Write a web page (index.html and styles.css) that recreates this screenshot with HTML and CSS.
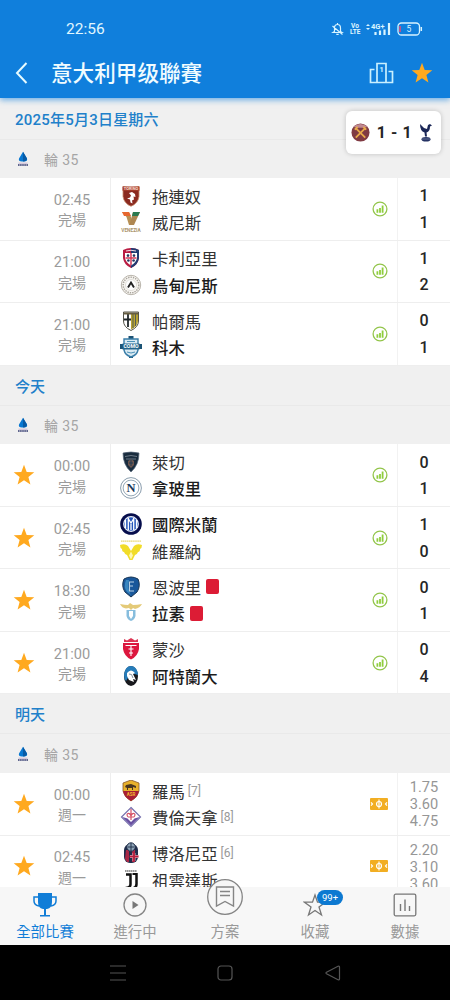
FILE: index.html
```html
<!DOCTYPE html>
<html lang="zh-Hant">
<head>
    <meta charset="UTF-8">
    <meta name="viewport" content="width=device-width, initial-scale=1.0">
    <title>意大利甲级聯賽</title>
    <link rel="stylesheet" href="styles.css">
</head>
<body>
    <!-- Icons and crests -->
    <svg class="defs" width="0" height="0">
        <symbol id="star" viewBox="0 0 22 22"><path fill="#ffa91f" d="M11 .8l2.7 7.1 7.6.4-5.9 4.8 2 7.4L11 16.3l-6.4 4.2 2-7.4L.7 8.3l7.6-.4z"/></symbol>
        <symbol id="stats" viewBox="0 0 16 16"><circle cx="8" cy="8" r="6.9" fill="none" stroke="#93c54b" stroke-width="1.3"/><path d="M5.400 8.300v3.500M8 7v4.800M10.600 4.500v7.300" stroke="#8fce3c" stroke-width="1.800"/></symbol>
        <symbol id="pitch" viewBox="0 0 18 12"><rect width="18" height="12" rx="1" fill="#f2ae22"/><path d="M9 1.500v9M1 4.400l1.500 1.600L1 7.600M17 4.400L15.500 6 17 7.600" stroke="#fff" stroke-width="1.200" fill="none"/><circle cx="9" cy="6" r="2.500" stroke="#fff" stroke-width="1.200" fill="none"/></symbol>
        <symbol id="seriea" viewBox="0 0 12 16"><path d="M6 .8l4 6.700Q11 11 6 10.500 1 11 2 7.500z" fill="#0878d2"/><path d="M6 .8l4 6.700Q10 10 6 10.500z" fill="#075aa5"/><path d="M1.500 12.200h9" stroke="#c9b6d2" stroke-width="1"/><path d="M1 14h10" stroke="#30386e" stroke-width="1.500" stroke-dasharray="1.600 .5"/></symbol>

        <symbol id="torino" viewBox="0 0 22 22"><path d="M3 1.500q8 2 16 0v10q-1 7-8 9.800Q4 18.500 3 11.500z" fill="#8b2a20" stroke="#c88e70" stroke-width=".8"/><path d="M2.500 1.500h17v4.200h-17z" fill="#a9412f"/><text x="11" y="5" font-size="4" font-weight="700" text-anchor="middle" fill="#f6dfd2">TORINO</text><path d="M9 8l3-1 3 2 .5 3-2-.5.500 3-2 1 .5 3-2-1-.5-3-3-1 3-1 1-2z" fill="#fff"/></symbol>
        <symbol id="venezia" viewBox="0 0 22 22"><path d="M2 1h7l5 13H9L6.500 6z" fill="#b79055"/><path d="M2 1h7l2 4H4z" fill="#e6672f"/><path d="M13 1h7l-6 13H9.500z" fill="#ae8752"/><path d="M13 1h7l-2 4h-6z" fill="#2c7a50"/><text x="11" y="20.500" font-size="4.800" font-weight="700" text-anchor="middle" fill="#aa936d">VENEZIA</text></symbol>
        <symbol id="cagliari" viewBox="0 0 22 22"><path d="M3 3q8-4 16 0v8q-1 7-8 10-7-3-8-10z" fill="#b91c43"/><path d="M11 1q5 0 8 2v8q-1 7-8 10z" fill="#203b72"/><path d="M5 6h12v5q-1 5-6 7.500Q6 16 5 11z" fill="#fff"/><path d="M11 6v12M5.500 11h11" stroke="#d33b59" stroke-width="1.500"/><g fill="#263760"><circle cx="8" cy="8.600" r="1.300"/><circle cx="14" cy="8.600" r="1.300"/><circle cx="8.400" cy="13.500" r="1.300"/><circle cx="13.600" cy="13.500" r="1.300"/></g><path d="M6 4q5-1.500 10 0" stroke="#efd9e1" fill="none"/></symbol>
        <symbol id="udinese" viewBox="0 0 22 22"><circle cx="11" cy="11" r="9.700" fill="#f8f6f2" stroke="#b9b4ab"/><circle cx="11" cy="11" r="7.800" fill="none" stroke="#aaa69e" stroke-width="1.500" stroke-dasharray="1.400 1"/><circle cx="11" cy="11" r="5.500" fill="#fff" stroke="#d0ccc5" stroke-width=".6"/><path d="M8 13.500l3-5 3 5" fill="none" stroke="#222" stroke-width="1.900"/></symbol>
        <symbol id="parma" viewBox="0 0 22 22"><path d="M3.500 2h15v9q0 6-7.500 9.500Q3.500 17 3.500 11z" fill="#fff" stroke="#555449"/><path d="M11 4h7v7q0 5-7 8.500z" fill="#b8a332"/><path d="M13 4v14M15.500 4v12" stroke="#545e55" stroke-width="1"/><path d="M8 4v13M4 9.500h7" stroke="#20272b" stroke-width="1.800"/><path d="M4 3.500h14" stroke="#665d40" stroke-width="2"/></symbol>
        <symbol id="como" viewBox="0 0 22 22"><path d="M8.500 0h5v3h-5zM0 8h4v5H0zM18 8h4v5h-4zM9 18h4v4H9z" fill="#1c5375"/><path d="M4 3h14v11q-1 5-7 7-6-2-7-7z" fill="#d9eaf3" stroke="#397da8" stroke-width="1.400"/><path d="M2.500 7.500h17v6h-17z" fill="#24658c"/><text x="11" y="12.400" font-size="5.200" font-weight="700" text-anchor="middle" fill="#fff">COMO</text><path d="M7 5.500h8M7 16q4 2 8 0" stroke="#4c91b8" fill="none"/></symbol>
        <symbol id="lecce" viewBox="0 0 22 22"><path d="M3 2q8-2 16 0 0 12-8 19Q3 14 3 2z" fill="#192c3e" stroke="#566578" stroke-width=".7"/><path d="M5 5.500q6-2 12 0M6 8h10" stroke="#6c7986" fill="none"/><path d="M8 10q3-3 6 0v4l-3 3-3-3z" fill="#6c554e"/><path d="M9 12h4M11 9v6" stroke="#233a50"/></symbol>
        <symbol id="napoli" viewBox="0 0 22 22"><circle cx="11" cy="11" r="10.400" fill="#fff" stroke="#6c8498" stroke-width=".8"/><circle cx="11" cy="11" r="7.900" fill="none" stroke="#7890a2" stroke-width=".8"/><text class="serif" x="11" y="15.200" font-size="12.500" font-weight="700" text-anchor="middle" fill="#18385c">N</text></symbol>
        <symbol id="inter" viewBox="0 0 22 22"><circle cx="11" cy="11" r="10.800" fill="#060d4c"/><circle cx="11" cy="11" r="7.300" fill="#2455ba" stroke="#e9eff9" stroke-width="1.200"/><path d="M8.300 5v12M13.700 5v12M5.500 7v8M16.500 7v8M8.500 6l2.500 4 2.500-4M11 9v8" stroke="#fff" stroke-width="1.300" fill="none"/></symbol>
        <symbol id="verona" viewBox="0 0 22 22"><path d="M1 1.200h20" stroke="#e8d873" stroke-width="1.200" stroke-dasharray="1.500 .4"/><path d="M0 5q5-2 8 1l3 5 3-5q3-3 8-1 0 3-2 4 0 3-2 3-1 3-3 3l-2.500 5h-3L7 15q-2 0-3-3-2 0-2-3Q0 8 0 5z" fill="#f1dc28"/><path d="M11 11.500l-2 4 2 4 2-4z" fill="#fff8b0"/></symbol>
        <symbol id="empoli" viewBox="0 0 22 22"><path d="M4 3q7-4 14 0 3 7-1 13l-6 5-6-5Q1 10 4 3z" fill="#19579a" stroke="#153353"/><path d="M6 4q-3 7 1 12l4 3q-4-6-2-15z" fill="#3986bf"/><path d="M14 6H9.500v9H14M9.500 10H13" stroke="#b9d1e5" stroke-width="1.100" fill="none"/></symbol>
        <symbol id="lazio" viewBox="0 0 22 22"><path d="M0 2q5 1 8 1l2-2 3 2q4 0 9-1-2 4-7 5l-2-1-2 2-2-2-3 .5Q2 6 0 2z" fill="#e4ca78"/><path d="M6.500 8h9v6q-1 4-4.500 5-3.500-1-4.500-5z" fill="#87bddd"/><path d="M9 9h4v5l-2 3-2-3z" fill="#fff"/></symbol>
        <symbol id="monza" viewBox="0 0 22 22"><path d="M4 1l3 1.500L11 0l4 2.500L18 1v3H4z" fill="#dd3554"/><path d="M3 5h16v6q-1 7-8 10.500Q4 18 3 11z" fill="#dc173e"/><path d="M5.500 7.500h11M8.500 11h5M11 8v10M9 15h4" stroke="#fff" stroke-width="1.100"/></symbol>
        <symbol id="atalanta" viewBox="0 0 22 22"><ellipse cx="11" cy="11" rx="7" ry="10" fill="#18191d"/><path d="M11 1c4 0 7 4 7 9l-7-2-5 8Q4 14 4 10q1-9 7-9z" fill="#267cba"/><path d="M7 8q4-5 8 0l-2 1 3 6-3-1 1 3-5-2-2-4z" fill="#fff"/><path d="M9 9q3-1 4 4" stroke="#8392a1" fill="none"/></symbol>
        <symbol id="roma" viewBox="0 0 22 22"><path d="M3 3l8-3 8 3v8q-1 6-8 10-7-4-8-10z" fill="#e8b12b" stroke="#86572c" stroke-width=".8"/><path d="M3 11h16q-1 6-8 10-7-4-8-10z" fill="#a81d35"/><path d="M6 5l5-1 5 2v2l-3-1v3h-1V8H8v2H7V8L5 7z" fill="#49351f"/><text x="11" y="15.500" font-size="4.500" font-weight="700" text-anchor="middle" fill="#efb52e">ASR</text></symbol>
        <symbol id="fiorentina" viewBox="0 0 22 22"><path d="M11 1.500L20.500 11 11 20.500 1.500 11z" fill="#fff" stroke="#7670ad" stroke-width="1.200"/><path d="M2.500 11L11 19.500l8.500-8.500-5 1.500L11 16l-3.500-3.500z" fill="#6950a1"/><path d="M11 3v11M8 11c-3-4 2-5 3-1 1-4 6-3 3 1M8 11h6" stroke="#d65267" stroke-width="1.200" fill="none"/></symbol>
        <symbol id="bologna" viewBox="0 0 22 22"><rect x="4" y="2" width="14" height="19" rx="6" fill="#202d4b"/><path d="M6 8h3v12H7l-2-3zM12 8h3v12h-3z" fill="#a92746"/><circle cx="11" cy="5" r="4.200" fill="#8fa4b7" stroke="#23314b"/><path d="M8 5h6M11 1v8" stroke="#22344f"/><path d="M14 11v8M10 14.500h8.500" stroke="#e5ccd5" stroke-width="2.800"/><path d="M14 10.500v9M9.500 14.500h9" stroke="#b61f3e" stroke-width="1.900"/></symbol>
        <symbol id="juventus" viewBox="0 0 22 22"><path d="M5 2h12" stroke="#777" stroke-width="1.700" stroke-dasharray="1.500 .4"/><path d="M6 5.500h4.500V15q0 4-5 4M16.500 4v11q0 4.500-5.500 4.500" fill="none" stroke="#111" stroke-width="2.500"/><path d="M12.500 5h4" stroke="#111" stroke-width="2" fill="none"/></symbol>
    </svg>

    <div class="app">
        <header class="header">
            <div class="status-bar">
                <span class="clock">22:56</span>
                <div class="status-icons">
                    <svg width="13" height="14" viewBox="0 0 13 14" fill="none" stroke="#d8f4ff" stroke-width="1.200"><path d="M3.500 9.500V6q0-3.500 3-3.500t3 3.500v3.500l1.500 1H2zM6.500 1v1.500M5.300 12.300h2.400M1.500 4l10 8.500"/></svg>
                    <span class="volte">Vo<br>LTE</span>
                    <svg width="25" height="14" viewBox="0 0 25 14"><path d="M0 4l2-2 2 2zM0 6l2 2 2-2z" fill="#d8f4ff"/><text x="5" y="6.500" font-size="7.500" font-weight="700" fill="#d8f4ff">4G+</text><path d="M9.500 13v-3M14 13V8.500M18.500 13V7.500M23 13V1" stroke="#d8f4ff" stroke-width="2.200"/></svg>
                    <svg class="battery" width="26" height="14" viewBox="0 0 26 14"><rect x="1" y="1" width="21.500" height="12" rx="3.500" fill="none" stroke="#d8f4ff" stroke-width="1.300"/><path d="M3 4v6" stroke="#df4c7b" stroke-width="1.600"/><path d="M24.300 5v4" stroke="#d8f4ff" stroke-width="1.500"/><text x="12" y="10" font-size="8.500" text-anchor="middle" fill="#d8f4ff">5</text></svg>
                </div>
            </div>
            <div class="title-bar">
                <svg class="back" width="13" height="22" viewBox="0 0 13 22"><path d="M11.500 1L2 11l9.500 10" fill="none" stroke="#e6fbff" stroke-width="2"/></svg>
                <h1>意大利甲级聯賽</h1>
                <svg class="podium" width="25" height="22" viewBox="0 0 25 22"><path d="M8 20.500V1.500h9v19M5.500 7.500h-4v13h22v-11h-4" fill="none" stroke="#c9f0ff" stroke-width="1.700"/><text x="12.500" y="9.500" font-size="8" font-weight="700" text-anchor="middle" fill="#c9f0ff">1</text></svg>
                <svg class="fav" width="22" height="22"><use href="#star"/></svg>
            </div>
        </header>

        <main class="list">
            <div class="live-score">
                <svg width="19" height="19" viewBox="0 0 20 20"><circle cx="10" cy="10" r="9.500" fill="#803b43"/><path d="M2.500 4q7-6 15 0l-3 1h-9z" fill="#c18991"/><path d="M5 5.500l10 10M15 5.500l-10 10" stroke="#e8aa4b" stroke-width="1.900"/><path d="M4 7l3-3M13 4l3 3" stroke="#e8aa4b" stroke-width="2"/></svg>
                <span>1 - 1</span>
                <svg width="14" height="19" viewBox="0 0 14 19"><path d="M1 1l4 4 3 1 1-4 2-1 2 1.500-2 1q0 5-3.500 6l.5 4h-2l-.5-4Q1 8 1 1z" fill="#1b2757"/><ellipse cx="7" cy="16.300" rx="4.500" ry="2.300" fill="#243263"/><path d="M3 16h8" stroke="#8089aa" stroke-width=".7"/></svg>
            </div>

            <section class="day first">
                <h2>2025年5月3日星期六</h2>
                <div class="round"><svg width="12" height="16"><use href="#seriea"/></svg><span>輪 35</span></div>
                <div class="match">
                    <div class="star"></div>
                    <div class="time"><span>02:45</span><span>完場</span></div>
                    <div class="teams">
                        <div class="team"><svg><use href="#torino"/></svg><span>拖連奴</span></div>
                        <div class="team"><svg><use href="#venezia"/></svg><span>威尼斯</span></div>
                    </div>
                    <svg class="info"><use href="#stats"/></svg>
                    <div class="score"><span>1</span><span>1</span></div>
                </div>
                <div class="match">
                    <div class="star"></div>
                    <div class="time"><span>21:00</span><span>完場</span></div>
                    <div class="teams">
                        <div class="team"><svg><use href="#cagliari"/></svg><span>卡利亞里</span></div>
                        <div class="team win"><svg><use href="#udinese"/></svg><span>烏甸尼斯</span></div>
                    </div>
                    <svg class="info"><use href="#stats"/></svg>
                    <div class="score"><span>1</span><span>2</span></div>
                </div>
                <div class="match">
                    <div class="star"></div>
                    <div class="time"><span>21:00</span><span>完場</span></div>
                    <div class="teams">
                        <div class="team"><svg><use href="#parma"/></svg><span>帕爾馬</span></div>
                        <div class="team win"><svg><use href="#como"/></svg><span>科木</span></div>
                    </div>
                    <svg class="info"><use href="#stats"/></svg>
                    <div class="score"><span>0</span><span>1</span></div>
                </div>
            </section>

            <section class="day">
                <h2>今天</h2>
                <div class="round"><svg width="12" height="16"><use href="#seriea"/></svg><span>輪 35</span></div>
                <div class="match">
                    <div class="star"><svg><use href="#star"/></svg></div>
                    <div class="time"><span>00:00</span><span>完場</span></div>
                    <div class="teams">
                        <div class="team"><svg><use href="#lecce"/></svg><span>萊切</span></div>
                        <div class="team win"><svg><use href="#napoli"/></svg><span>拿玻里</span></div>
                    </div>
                    <svg class="info"><use href="#stats"/></svg>
                    <div class="score"><span>0</span><span>1</span></div>
                </div>
                <div class="match">
                    <div class="star"><svg><use href="#star"/></svg></div>
                    <div class="time"><span>02:45</span><span>完場</span></div>
                    <div class="teams">
                        <div class="team win"><svg><use href="#inter"/></svg><span>國際米蘭</span></div>
                        <div class="team"><svg><use href="#verona"/></svg><span>維羅納</span></div>
                    </div>
                    <svg class="info"><use href="#stats"/></svg>
                    <div class="score"><span>1</span><span>0</span></div>
                </div>
                <div class="match">
                    <div class="star"><svg><use href="#star"/></svg></div>
                    <div class="time"><span>18:30</span><span>完場</span></div>
                    <div class="teams">
                        <div class="team"><svg><use href="#empoli"/></svg><span>恩波里</span><i class="red-card"></i></div>
                        <div class="team win"><svg><use href="#lazio"/></svg><span>拉素</span><i class="red-card"></i></div>
                    </div>
                    <svg class="info"><use href="#stats"/></svg>
                    <div class="score"><span>0</span><span>1</span></div>
                </div>
                <div class="match">
                    <div class="star"><svg><use href="#star"/></svg></div>
                    <div class="time"><span>21:00</span><span>完場</span></div>
                    <div class="teams">
                        <div class="team"><svg><use href="#monza"/></svg><span>蒙沙</span></div>
                        <div class="team win"><svg><use href="#atalanta"/></svg><span>阿特蘭大</span></div>
                    </div>
                    <svg class="info"><use href="#stats"/></svg>
                    <div class="score"><span>0</span><span>4</span></div>
                </div>
            </section>

            <section class="day">
                <h2>明天</h2>
                <div class="round"><svg width="12" height="16"><use href="#seriea"/></svg><span>輪 35</span></div>
                <div class="match">
                    <div class="star"><svg><use href="#star"/></svg></div>
                    <div class="time"><span>00:00</span><span>週一</span></div>
                    <div class="teams">
                        <div class="team"><svg><use href="#roma"/></svg><span>羅馬</span><small>[7]</small></div>
                        <div class="team"><svg><use href="#fiorentina"/></svg><span>費倫天拿</span><small>[8]</small></div>
                    </div>
                    <svg class="info odds-icon"><use href="#pitch"/></svg>
                    <div class="score odds"><span>1.75</span><span>3.60</span><span>4.75</span></div>
                </div>
                <div class="match">
                    <div class="star"><svg><use href="#star"/></svg></div>
                    <div class="time"><span>02:45</span><span>週一</span></div>
                    <div class="teams">
                        <div class="team"><svg><use href="#bologna"/></svg><span>博洛尼亞</span><small>[6]</small></div>
                        <div class="team"><svg><use href="#juventus"/></svg><span>祖雲達斯</span></div>
                    </div>
                    <svg class="info odds-icon"><use href="#pitch"/></svg>
                    <div class="score odds"><span>2.20</span><span>3.10</span><span>3.60</span></div>
                </div>
            </section>
        </main>

        <nav class="tabs">
            <a class="tab active">
                <svg width="24" height="24" viewBox="0 0 24 24"><path d="M5 0h14v9q0 6-5 7h-1v6h4v1.500H7V22h4v-6h-1q-5-1-5-7z" fill="#107dd7"/><path d="M5 4H1v4q0 4 5 5M19 4h4v4q0 4-5 5" fill="none" stroke="#107dd7" stroke-width="1.500"/></svg>
                <span>全部比賽</span>
            </a>
            <a class="tab">
                <svg width="24" height="24" viewBox="0 0 24 24"><circle cx="12" cy="12" r="11" fill="none" stroke="#858585" stroke-width="1.300"/><path d="M9.500 8l6 4-6 4z" fill="#777"/></svg>
                <span>進行中</span>
            </a>
            <a class="tab plan">
                <svg width="36" height="36" viewBox="0 0 36 36"><circle cx="18" cy="18" r="17.300" fill="#f7f7f7" stroke="#858585" stroke-width="1.300"/><path d="M9.500 8h17v19L18 22.500 9.500 27z" fill="none" stroke="#858585" stroke-width="1.400"/><path d="M13 12.500h10M13 16.500h10" stroke="#858585" stroke-width="1.300"/></svg>
                <span>方案</span>
            </a>
            <a class="tab">
                <svg width="24" height="24" viewBox="0 0 24 24"><path d="M12 2l2.500 7.200h8l-6.500 4.800 2.500 8L12 17.500 5.500 22 8 14 1.500 9.200h8z" fill="none" stroke="#777" stroke-width="1.300"/></svg>
                <b class="badge">99+</b>
                <span>收藏</span>
            </a>
            <a class="tab">
                <svg width="24" height="24" viewBox="0 0 24 24"><rect x="1.200" y="1.200" width="21.600" height="21.600" rx="1.500" fill="none" stroke="#777" stroke-width="1.300"/><path d="M7.500 11v7M12 6.500V18M16.500 13v5" stroke="#777" stroke-width="1.400"/></svg>
                <span>數據</span>
            </a>
        </nav>

        <div class="system-nav">
            <svg width="16" height="16" viewBox="0 0 16 16"><path d="M0 1h16M0 8h16M0 15h16" stroke="#555" stroke-width="1.200"/></svg>
            <svg width="16" height="16" viewBox="0 0 16 16"><rect x="1" y="1" width="14" height="14" rx="3" fill="none" stroke="#555" stroke-width="1.200"/></svg>
            <svg width="16" height="16" viewBox="0 0 16 16"><path d="M1.500 7.200L13 1.200q1.500-.5 1.500 1v11.600q0 1.500-1.500 1L1.500 8.800q-1-.8 0-1.600z" fill="none" stroke="#555" stroke-width="1.200"/></svg>
        </div>
    </div>
</body>
</html>
```

FILE: styles.css
```css
* {
    box-sizing: border-box;
}

body {
    margin: 0;
    font-family: Roboto, "Noto Sans CJK TC", sans-serif;
    background: #fff;
}

.defs {
    position: absolute;
}

.serif {
    font-family: "Liberation Serif", serif;
}

svg {
    display: block;
    flex-shrink: 0;
}

.app {
    width: 450px;
    height: 1000px;
    display: flex;
    flex-direction: column;
    overflow: hidden;
}

/* Header */
.header {
    height: 98px;
    flex-shrink: 0;
    background: #107fdc;
    box-shadow: 0 2px 6px rgba(16, 127, 220, 0.6);
    z-index: 1;
}

.status-bar {
    height: 48px;
    padding: 10px 27px 0 66px;
    display: flex;
    align-items: center;
    justify-content: space-between;
    color: #e0f7ff;
}

.clock {
    font-size: 15.5px;
}

.status-icons {
    display: flex;
    align-items: center;
    gap: 6px;
}

.volte {
    width: 10px;
    font-size: 6.5px;
    line-height: 6.5px;
    font-weight: 700;
    text-align: center;
}

.title-bar {
    height: 50px;
    padding: 0 17px 0 15px;
    display: flex;
    align-items: center;
}

h1 {
    flex: 1;
    margin: 2px 0 0 23px;
    font-size: 21.6px;
    line-height: 30px;
    font-weight: 500;
    color: #f0fcff;
}

.podium {
    margin-right: 17px;
}

/* Match list */
.list {
    position: relative;
    flex: 1;
    min-height: 0;
    overflow: hidden;
}

.live-score {
    position: absolute;
    top: 13px;
    right: 9px;
    width: 95px;
    height: 43px;
    padding: 0 8px 0 5px;
    display: flex;
    align-items: center;
    justify-content: space-between;
    border-radius: 6px;
    background: #fff;
    box-shadow: 0 0 5px rgba(0, 0, 0, 0.2);
    font-size: 16px;
    font-weight: 700;
    letter-spacing: 0.6px;
    color: #262626;
    white-space: nowrap;
}

h2 {
    height: 40px;
    margin: 0;
    padding-left: 15px;
    background: #f0f0f0;
    border-bottom: 1px solid #e9e9e9;
    font-size: 15px;
    line-height: 42px;
    font-weight: 500;
    color: #2180ca;
}

.first h2 {
    height: 41.5px;
    line-height: 44px;
    letter-spacing: 0.22px;
}

.round {
    height: 38.7px;
    padding-left: 17px;
    display: flex;
    align-items: center;
    gap: 15px;
    background: #f0f0f0;
    font-size: 14px;
    color: #a5a5a5;
    letter-spacing: 0.4px;
}

.match {
    height: 62.5px;
    display: flex;
    align-items: center;
    background: #fff;
    border-bottom: 1px solid #eee;
}

.star {
    width: 48px;
    padding-left: 13px;
}

.star svg {
    width: 22px;
    height: 22px;
}

.time {
    width: 63px;
    height: 100%;
    padding: 3px 14px 0 0;
    display: flex;
    flex-direction: column;
    justify-content: center;
    align-items: center;
    border-right: 1px solid #eee;
    font-size: 14px;
    line-height: 20.5px;
    color: #9b9b9b;
}

.time span:first-child {
    font-size: 14.6px;
}

.teams {
    flex: 1;
    padding-left: 9px;
}

.team {
    height: 26.5px;
    display: flex;
    align-items: center;
    font-size: 16.4px;
    color: #333;
    white-space: nowrap;
}

.team svg {
    width: 22px;
    height: 22px;
    margin-right: 10px;
}

.team small {
    margin-left: 3px;
    font-size: 12px;
    color: #999;
}

.win {
    font-weight: 500;
    color: #1c1c1c;
}

.red-card {
    width: 13px;
    height: 15px;
    margin-left: 5px;
    border-radius: 2px;
    background: #dc1c35;
}

.info {
    width: 16px;
    height: 16px;
    margin-right: 9px;
}

.odds-icon {
    width: 18px;
    height: 12px;
}

.score {
    width: 53px;
    height: 100%;
    padding-top: 2px;
    display: flex;
    flex-direction: column;
    justify-content: center;
    align-items: center;
    border-left: 1px solid #f2f2f2;
    font-size: 16px;
    line-height: 26.5px;
    font-weight: 500;
    color: #262626;
}

.odds {
    font-size: 14.6px;
    line-height: 17px;
    font-weight: 400;
    color: #969696;
}

/* Bottom tabs */
.tabs {
    height: 58px;
    flex-shrink: 0;
    display: flex;
    background: #f7f7f7;
    z-index: 1;
}

.tab {
    position: relative;
    width: 90px;
    padding-top: 6px;
    display: flex;
    flex-direction: column;
    align-items: center;
    gap: 5px;
    font-size: 14.4px;
    line-height: 21px;
    color: #999;
}

.active {
    color: #107dd7;
}

.plan {
    padding-top: 0;
    margin-top: -8px;
    gap: 7px;
}

.badge {
    position: absolute;
    top: 3px;
    left: 47px;
    width: 26px;
    height: 15px;
    border-radius: 8px;
    background: #0d79d1;
    color: #fff;
    font-size: 9.5px;
    line-height: 15px;
    font-weight: 400;
    text-align: center;
}

/* Phone buttons */
.system-nav {
    height: 55px;
    flex-shrink: 0;
    display: flex;
    justify-content: center;
    align-items: center;
    gap: 91.5px;
    background: #000;
}
```
